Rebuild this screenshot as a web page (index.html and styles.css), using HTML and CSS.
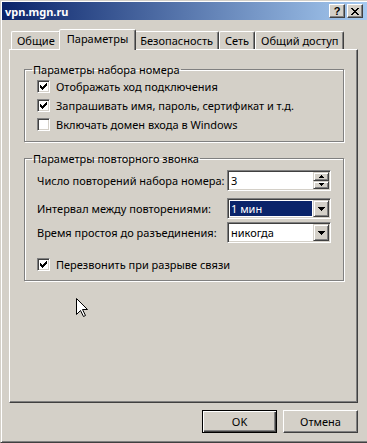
FILE: index.html
```html
<!DOCTYPE html>
<html lang="ru">
<head>
    <meta charset="UTF-8">
    <title>vpn.mgn.ru</title>
    <link rel="stylesheet" href="styles.css">
</head>
<body>
    <div class="window">
        <!-- Заголовок окна -->
        <div class="titlebar">
            <span class="title">vpn.mgn.ru</span>
            <div class="caption-buttons">
                <button class="caption-btn help">?</button>
                <button class="caption-btn">
                    <svg width="8" height="7" viewBox="0 0 8 7"><path d="M0 0h2v1H0zM6 0h2v1H6zM1 1h2v1H1zM5 1h2v1H5zM2 2h4v1H2zM3 3h2v1H3zM2 4h4v1H2zM1 5h2v1H1zM5 5h2v1H5zM0 6h2v1H0zM6 6h2v1H6z"/></svg>
                </button>
            </div>
        </div>

        <div class="dialog">
            <!-- Вкладки -->
            <div class="tabs">
                <div class="tab">Общие</div>
                <div class="tab active">Параметры</div>
                <div class="tab">Безопасность</div>
                <div class="tab">Сеть</div>
                <div class="tab">Общий доступ</div>
            </div>

            <div class="panel">
                <fieldset class="group">
                    <legend>Параметры набора номера</legend>
                    <div class="check-list">
                        <label class="check">
                            <span class="box"><svg width="7" height="7" viewBox="0 0 7 7"><path d="M6 0h1v1H6zM5 1h2v1H5zM0 2h1v1H0zM4 2h3v1H4zM0 3h2v1H0zM3 3h3v1H3zM0 4h5v1H0zM1 5h3v1H1zM2 6h1v1H2z"/></svg></span>
                            Отображать ход подключения
                        </label>
                        <label class="check">
                            <span class="box"><svg width="7" height="7" viewBox="0 0 7 7"><path d="M6 0h1v1H6zM5 1h2v1H5zM0 2h1v1H0zM4 2h3v1H4zM0 3h2v1H0zM3 3h3v1H3zM0 4h5v1H0zM1 5h3v1H1zM2 6h1v1H2z"/></svg></span>
                            Запрашивать имя, пароль, сертификат и т.д.
                        </label>
                        <label class="check">
                            <span class="box"></span>
                            Включать домен входа в Windows
                        </label>
                    </div>
                </fieldset>

                <fieldset class="group redial">
                    <legend>Параметры повторного звонка</legend>
                    <div class="field-row">
                        <span>Число повторений набора номера:</span>
                        <div class="field spin">
                            <span class="value">3</span>
                            <div class="spin-buttons">
                                <span class="raised"><svg width="5" height="3" viewBox="0 0 5 3"><path d="M2 0h1v1h1v1h1v1H0V2h1V1h1z"/></svg></span>
                                <span class="raised"><svg width="5" height="3" viewBox="0 0 5 3"><path d="M0 0h5v1H4v1H3v1H2V2H1V1H0z"/></svg></span>
                            </div>
                        </div>
                    </div>
                    <div class="field-row combo-first">
                        <span>Интервал между повторениями:</span>
                        <div class="field combo">
                            <span class="value selected">1 мин</span>
                            <span class="raised drop"><svg width="7" height="4" viewBox="0 0 7 4"><path d="M0 0h7v1H6v1H5v1H4v1H3V3H2V2H1V1H0z"/></svg></span>
                        </div>
                    </div>
                    <div class="field-row combo-second">
                        <span>Время простоя до разъединения:</span>
                        <div class="field combo">
                            <span class="value">никогда</span>
                            <span class="raised drop"><svg width="7" height="4" viewBox="0 0 7 4"><path d="M0 0h7v1H6v1H5v1H4v1H3V3H2V2H1V1H0z"/></svg></span>
                        </div>
                    </div>
                    <label class="check redial-check">
                        <span class="box"><svg width="7" height="7" viewBox="0 0 7 7"><path d="M6 0h1v1H6zM5 1h2v1H5zM0 2h1v1H0zM4 2h3v1H4zM0 3h2v1H0zM3 3h3v1H3zM0 4h5v1H0zM1 5h3v1H1zM2 6h1v1H2z"/></svg></span>
                        Перезвонить при разрыве связи
                    </label>
                </fieldset>
            </div>

            <div class="actions">
                <button class="btn default">OK</button>
                <button class="btn">Отмена</button>
            </div>
        </div>

        <!-- Указатель мыши -->
        <svg class="cursor" width="12" height="20" viewBox="0 0 12 20">
            <path d="M0.5 0.5V16.5L4.5 12.5L7.5 18.5L9.5 17.5L6.5 11.5H11.5Z" fill="#fff" stroke="#000"/>
        </svg>
    </div>
</body>
</html>
```
FILE: styles.css
```css
* {
    box-sizing: border-box;
}

body {
    margin: 0;
    width: 367px;
    height: 443px;
    overflow: hidden;
    background: #d4d0c8;
    font-family: 'Noto Sans', sans-serif;
    font-size: 11px;
    line-height: 13px;
    color: #000;
}

button {
    font: inherit;
    color: #000;
    padding: 0;
}

/* Окно */
.window {
    position: relative;
    width: 369px;
    height: 443px;
    background: #d4d0c8;
    border: 1px solid;
    border-color: #d4d0c8 #404040 #404040 #d4d0c8;
    box-shadow: inset 1px 1px #fff, inset -1px -1px #808080;
    padding: 1px;
    display: flex;
    flex-direction: column;
}

.titlebar {
    height: 18px;
    display: flex;
    align-items: center;
    justify-content: space-between;
    padding: 0 4px 0 3px;
    background: linear-gradient(to right, #0a246a, #a6caf0);
}

.title {
    color: #fff;
    font-weight: bold;
}

.caption-buttons {
    display: flex;
    gap: 2px;
}

.caption-btn {
    width: 16px;
    height: 14px;
    display: flex;
    align-items: center;
    justify-content: center;
    background: #d4d0c8;
    border: 1px solid;
    border-color: #fff #404040 #404040 #fff;
    box-shadow: inset -1px -1px #808080;
}

.caption-btn.help {
    font-family: 'Liberation Sans', sans-serif;
    font-weight: bold;
    font-size: 11px;
    line-height: 12px;
}

/* Содержимое диалога */
.dialog {
    padding: 9px 9px 8px 7px;
}

.tabs {
    display: flex;
    align-items: flex-end;
    height: 20px;
    padding-left: 2px;
}

.tab {
    height: 18px;
    padding: 0 5px;
    line-height: 17px;
    border: 1px solid;
    border-bottom: none;
    border-color: #fff #404040 transparent #fff;
    border-radius: 2px 2px 0 0;
    box-shadow: inset -1px 0 #808080;
    white-space: nowrap;
}

.tab.active {
    position: relative;
    z-index: 1;
    height: 21px;
    margin: 0 -2px -1px;
    padding: 0 7px;
    line-height: 18px;
    background: #d4d0c8;
}

.panel {
    height: 354px;
    border: 1px solid;
    border-color: #fff #404040 #404040 #fff;
    box-shadow: inset -1px -1px #808080;
    padding: 13px 13px 0 14px;
}

/* Группы */
.group {
    margin: 0;
    min-width: 0;
    padding: 2px 12px 8px;
    border: 1px solid #808080;
    box-shadow: inset 1px 1px #fff, 1px 1px #fff;
}

.group legend {
    margin-left: -5px;
    padding: 0 1px;
    line-height: 13px;
}

.group.redial {
    margin-top: 10px;
    padding-top: 5px;
    padding-bottom: 7px;
}

.check-list {
    display: flex;
    flex-direction: column;
    gap: 2px;
}

.check {
    height: 17px;
    display: flex;
    align-items: center;
    gap: 6px;
    white-space: nowrap;
}

.box {
    width: 13px;
    height: 13px;
    flex-shrink: 0;
    padding: 2px;
    background: #fff;
    border: 1px solid;
    border-color: #808080 #fff #fff #808080;
    box-shadow: inset 1px 1px #404040, inset -1px -1px #d4d0c8;
}

.box svg {
    display: block;
}

.redial-check {
    margin-top: 13px;
}

.field-row {
    height: 21px;
    display: flex;
    align-items: center;
    justify-content: space-between;
}

.combo-first {
    margin-top: 7px;
}

.combo-second {
    margin-top: 3px;
}

/* Поля ввода */
.field {
    width: 104px;
    height: 21px;
    display: flex;
    padding: 1px;
    background: #fff;
    border: 1px solid;
    border-color: #808080 #fff #fff #808080;
    box-shadow: inset 1px 1px #404040, inset -1px -1px #d4d0c8;
}

.field .value {
    flex: 1;
    padding-left: 2px;
    line-height: 17px;
}

.field .value.selected {
    margin: 1px;
    padding-left: 1px;
    line-height: 15px;
    background: #0a246a;
    color: #fff;
}

.raised {
    display: flex;
    align-items: center;
    justify-content: center;
    background: #d4d0c8;
    border: 1px solid;
    border-color: #d4d0c8 #404040 #404040 #d4d0c8;
    box-shadow: inset 1px 1px #fff, inset -1px -1px #808080;
}

.raised svg {
    display: block;
}

.spin-buttons {
    width: 16px;
    display: flex;
    flex-direction: column;
}

.spin-buttons .raised {
    flex: 1;
}

.drop {
    width: 16px;
}

/* Кнопки */
.actions {
    display: flex;
    justify-content: flex-end;
    gap: 6px;
    margin-top: 7px;
}

.btn {
    width: 75px;
    height: 23px;
    background: #d4d0c8;
    border: 1px solid;
    border-color: #fff #404040 #404040 #fff;
    box-shadow: inset -1px -1px #808080;
}

.btn.default {
    border-color: #000;
    box-shadow: inset 1px 1px #fff, inset -1px -1px #404040, inset -2px -2px #808080;
}

.cursor {
    position: absolute;
    left: 75px;
    top: 297px;
}
```
